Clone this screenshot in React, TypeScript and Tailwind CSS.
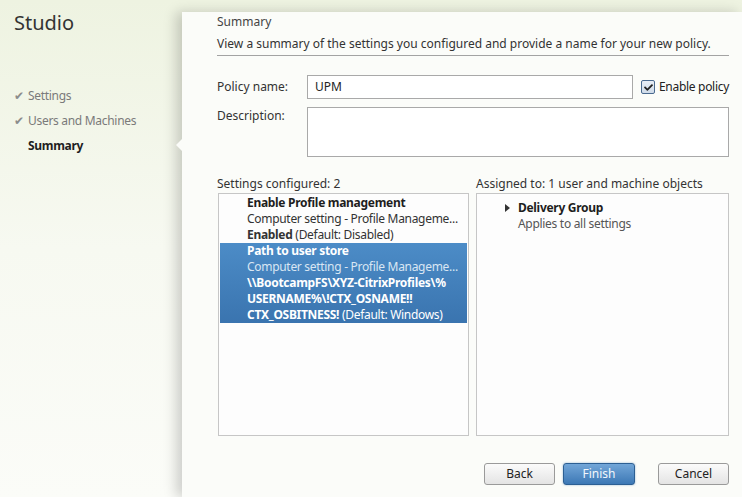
import { FaCheck } from "react-icons/fa";

const font = { fontFamily: '"Segoe UI", "Noto Sans", "Open Sans", sans-serif' };

const NavItem = ({ label, done, active }: { label: string; done?: boolean; active?: boolean }) => (
  <div className="flex items-center h-[25px] whitespace-nowrap">
    <span className="w-[14px] text-[12px] text-[#8c8c8c]">{done ? "✔" : ""}</span>
    <span className={active ? "font-bold text-[#1e1e1e]" : "text-[#7a7a7a]"}>{label}</span>
  </div>
);

const Button = ({ label, primary }: { label: string; primary?: boolean }) => (
  <button
    className={
      primary
        ? "w-[72px] h-[22px] rounded-[3px] border border-[#2c5f93] bg-gradient-to-b from-[#72a6d8] to-[#3c78b5] text-[#f2f7fc] text-[12px] shadow-[0_0_2px_rgba(60,120,180,0.6)]"
        : "w-[71px] h-[22px] rounded-[3px] border border-[#9a9a9a] bg-gradient-to-b from-[#fbfbfb] to-[#e4e4e4] text-[#222] text-[12px]"
    }
  >
    {label}
  </button>
);

export default function App() {
  return (
    <div
      className="w-[742px] h-[497px] flex overflow-hidden bg-gradient-to-b from-[#eef3e1] via-[#f7f9f1] to-[#fbfcf8] text-[12px] leading-[16px]"
      style={font}
    >
      {/* sidebar */}
      <div className="w-[182px] shrink-0 pl-[14px]">
        <div className="pt-[10px] text-[20px] leading-[26px] text-[#333]">Studio</div>
        <div className="mt-[47px] text-[12px] tracking-[-0.3px]">
          <NavItem label="Settings" done />
          <NavItem label="Users and Machines" done />
          <NavItem label="Summary" active />
        </div>
      </div>

      {/* main panel */}
      <div className="relative flex-1 mt-[12px] bg-[#fbfcf9] pl-[35px] pr-[14px] shadow-[-6px_0_12px_rgba(0,0,0,0.18)]">
        <div className="absolute left-[-6px] top-[127px] w-0 h-0 border-y-[6px] border-y-transparent border-r-[6px] border-r-[#fbfcf9]" />

        <div className="pt-[2px] text-[#444]">Summary</div>
        <div className="mt-[6px] pb-[3px] border-b border-[#a3a3a3] text-[#333] whitespace-nowrap">
          View a summary of the settings you configured and provide a name for your new policy.
        </div>

        <div className="mt-[19px] flex items-center">
          <div className="w-[90px] shrink-0 text-[#333]">Policy name:</div>
          <div className="w-[326px] shrink-0 h-[24px] border border-[#a9a9a9] bg-white flex items-center px-[7px] text-[#222]">
            UPM
          </div>
          <div className="ml-[8px] flex items-center whitespace-nowrap">
            <div className="w-[14px] h-[14px] shrink-0 border border-[#4a6a8f] rounded-[2px] bg-gradient-to-b from-[#e8eef6] to-[#cfdbe9] flex items-center justify-center">
              <FaCheck size={9} className="text-[#222]" />
            </div>
            <span className="ml-[4px] text-[#222] tracking-[-0.3px]">Enable policy</span>
          </div>
        </div>

        <div className="mt-[8px] flex">
          <div className="w-[90px] shrink-0 text-[#333] pt-[1px]">Description:</div>
          <div className="flex-1 h-[50px] border border-[#a9a9a9] bg-white" />
        </div>

        <div className="mt-[19px] flex gap-[7px]">
          <div className="w-[252px] shrink-0">
            <div className="text-[#333]">Settings configured: 2</div>
            <div className="mt-[1px] ml-[1px] h-[243px] border border-[#c6c6c6] bg-[#fdfdfd] p-[1px] whitespace-nowrap overflow-hidden tracking-[-0.3px]">
              <div className="pl-[27px] text-[#333]">
                <div className="font-bold text-[#1e1e1e]">Enable Profile management</div>
                <div>Computer setting - Profile Manageme...</div>
                <div>
                  <span className="font-bold">Enabled</span> (Default: Disabled)
                </div>
              </div>
              <div className="pl-[27px] bg-gradient-to-b from-[#4c8cc7] to-[#3a74af] text-white">
                <div className="font-bold">Path to user store</div>
                <div className="text-[#d9e6f3]">Computer setting - Profile Manageme...</div>
                <div className="font-bold">\\BootcampFS\XYZ-CitrixProfiles\%</div>
                <div className="font-bold">USERNAME%\!CTX_OSNAME!!</div>
                <div>
                  <span className="font-bold">CTX_OSBITNESS!</span> (Default: Windows)
                </div>
              </div>
            </div>
          </div>
          <div className="flex-1">
            <div className="text-[#333] whitespace-nowrap">Assigned to: 1 user and machine objects</div>
            <div className="mt-[1px] h-[243px] border border-[#c6c6c6] bg-[#fdfdfd] pt-[6px] pl-[28px] tracking-[-0.3px]">
              <div className="flex items-center">
                <span className="w-[13px] flex">
                  <span className="w-0 h-0 border-y-[4px] border-y-transparent border-l-[5px] border-l-[#333]" />
                </span>
                <span className="font-bold text-[#1e1e1e]">Delivery Group</span>
              </div>
              <div className="pl-[13px] text-[#555]">Applies to all settings</div>
            </div>
          </div>
        </div>

        <div className="mt-[27px] flex justify-end items-center">
          <Button label="Back" />
          <div className="ml-[8px]">
            <Button label="Finish" primary />
          </div>
          <div className="ml-[23px]">
            <Button label="Cancel" />
          </div>
        </div>
      </div>
    </div>
  );
}
